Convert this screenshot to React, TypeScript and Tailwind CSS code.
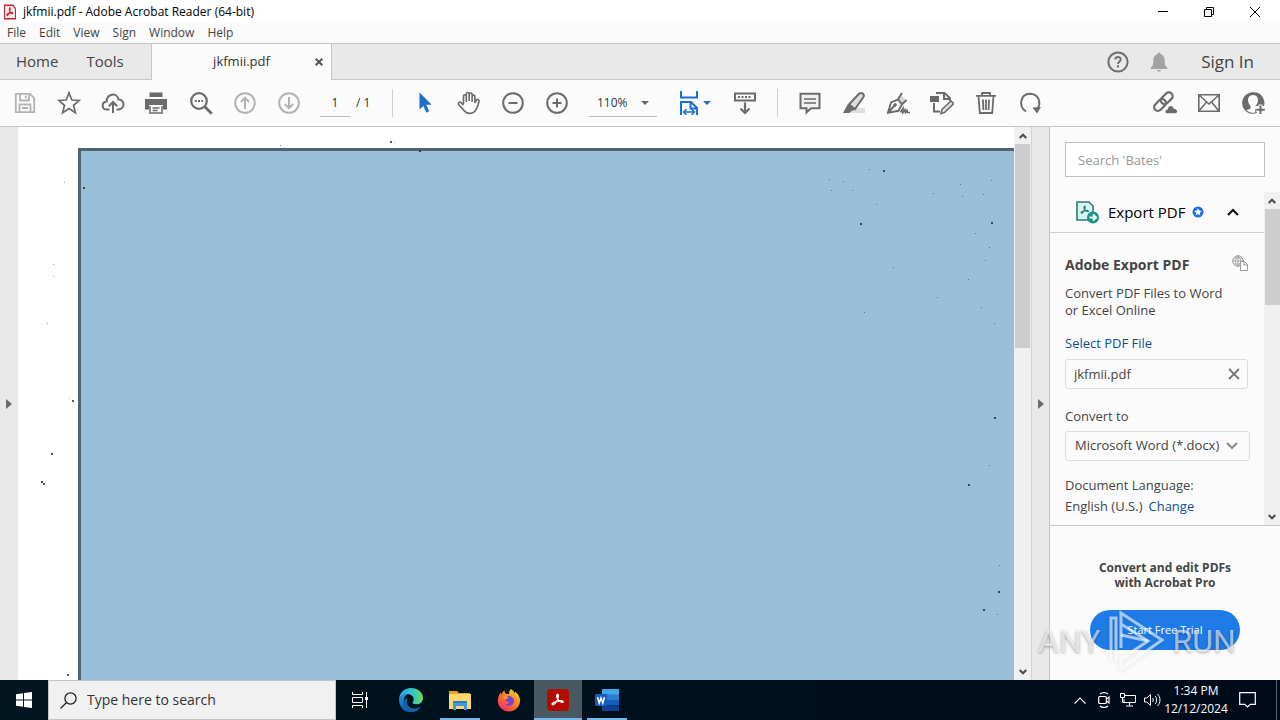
import type { ReactNode } from "react";
import clsx from "clsx";

interface IconProps {
  children: ReactNode;
  className?: string;
}

function Icon({ children, className }: IconProps) {
  return (
    <svg
      viewBox="0 0 24 24"
      aria-hidden="true"
      className={clsx("h-6 w-6 shrink-0", className)}
      fill="none"
      stroke="currentColor"
      strokeWidth="2"
    >
      {children}
    </svg>
  );
}

interface ToolProps {
  label: string;
  children: ReactNode;
  className?: string;
}

function Tool({ label, children, className }: ToolProps) {
  return (
    <button
      type="button"
      aria-label={label}
      className={clsx("flex h-10 w-11 shrink-0 items-center justify-center", className)}
    >
      <Icon>{children}</Icon>
    </button>
  );
}

function AcrobatMark() {
  return (
    <path
      d="M6 17c-1.200-.8.5-2.300 4-3.300 3-.9 7-1.200 7.600-.1.500 1.200-2.200 1.200-4.400-.6-2.200-1.800-3-5.200-2.300-6.600.6-1 1.700-.4 1.500 1.400C12.100 10.700 8.800 18.200 6 17z"
      fill="none"
    />
  );
}

const menus = ["File", "Edit", "View", "Sign", "Window", "Help"];

function TitleBar() {
  return (
    <header className="shrink-0">
      <div className="flex h-[23px] items-center bg-white text-black">
        <svg viewBox="0 0 24 24" className="ml-1 h-4 w-3 shrink-0" preserveAspectRatio="none" aria-hidden="true">
          <path d="M1 2h17l5 5v15H1z" fill="#fbe9e9" stroke="#c8202f" strokeWidth="2.200" />
          <g stroke="#c8202f" strokeWidth="2">
            <AcrobatMark />
          </g>
        </svg>
        <h1 className="ml-[7px] text-xs">jkfmii.pdf - Adobe Acrobat Reader (64-bit)</h1>
        <div className="ml-auto flex h-full pr-0.5">
          <button type="button" aria-label="Minimize" className="flex w-[46px] items-center justify-center">
            <svg viewBox="0 0 10 10" className="h-2.5 w-2.5" stroke="#000">
              <path d="M0 4.500h10" />
            </svg>
          </button>
          <button type="button" aria-label="Restore" className="flex w-[46px] items-center justify-center">
            <svg viewBox="0 0 10 10" className="h-2.5 w-2.5" stroke="#000" fill="none">
              <path d="M.5 2.500h7v7h-7zM2.500 2.500v-2h7v7h-2" />
            </svg>
          </button>
          <button type="button" aria-label="Close" className="flex w-[46px] items-center justify-center">
            <svg viewBox="0 0 10 10" className="h-2.5 w-2.5" stroke="#000">
              <path d="M0 0l10 10M10 0L0 10" />
            </svg>
          </button>
        </div>
      </div>
      <nav className="flex h-5 items-center gap-[13px] bg-[#fafafa] px-[7px] text-xs text-[#444]">
        {menus.map((menu) => (
          <button key={menu} type="button">
            {menu}
          </button>
        ))}
      </nav>
    </header>
  );
}

function TabBar() {
  return (
    <div className="flex h-[37px] shrink-0 items-stretch border-y border-[#c6c6c6] bg-[#e9e9e9] text-[#444]">
      <div className="flex w-[151px] gap-7 pl-4 text-[15px]">
        <button type="button">Home</button>
        <button type="button">Tools</button>
      </div>
      <div className="-mb-px flex w-[181px] items-center border-x border-[#c6c6c6] bg-[#fbfbfb]">
        <button type="button" className="flex-1 pl-5 text-center text-[13px] text-[#333]">
          jkfmii.pdf
        </button>
        <button type="button" aria-label="Close tab" className="mr-1 flex h-4 w-4 shrink-0 items-center justify-center">
          <svg viewBox="0 0 8 8" className="h-2 w-2" stroke="#555" strokeWidth="2">
            <path d="M.7.7l6.600 6.600M7.300.7L.7 7.300" />
          </svg>
        </button>
      </div>
      <div className="ml-auto flex items-center pr-[26px]">
        <button type="button" aria-label="Help" className="mr-[17px] text-[#707070]">
          <Icon>
            <circle cx="12" cy="12" r="9.600" />
            <path d="M9.300 9.600c0-3.600 5.400-3.500 5.400-.2 0 2.100-2.700 2.100-2.700 4.600" />
            <path d="M12 15.300v2.200" strokeWidth="2.200" />
          </Icon>
        </button>
        <button type="button" aria-label="Notifications" className="mr-[30px] text-[#a3a3a3]">
          <Icon>
            <path
              d="M12 2.500c.9 0 1.500.6 1.500 1.500 3 .9 4.200 3.300 4.200 6.500 0 4 .5 5.500 2.600 7V19H3.700v-1.500c2.100-1.500 2.600-3 2.600-7 0-3.200 1.200-5.600 4.200-6.500 0-.9.600-1.500 1.500-1.500zM10 20h4c-.3 2-3.700 2-4 0z"
              fill="currentColor"
              stroke="none"
            />
          </Icon>
        </button>
        <button type="button" className="text-[17px]">
          Sign In
        </button>
      </div>
    </div>
  );
}

function Divider({ className }: { className?: string }) {
  return <div className={clsx("h-7 w-px shrink-0 bg-[#cfcfcf]", className)} />;
}

function Toolbar() {
  return (
    <div className="flex h-[47px] shrink-0 items-center border-b border-[#c6c6c6] bg-[#fbfbfb] pr-[5px] pl-[3px] text-[#6b6b6b]">
      <Tool label="Save" className="text-[#b3b3b3]">
        <path d="M2.800 2.800H17l4.200 4.200v14.200H2.800zM7 3v6.500h9V3M12.800 4.500v3M6.500 21v-7.500h11V21M9 17h6" strokeWidth="1.800" />
      </Tool>
      <Tool label="Star">
        <path d="M12 1.800l2.800 7.200 7.500.4-5.800 4.900 1.900 7.500-6.400-4.200-6.400 4.200 1.900-7.500L1.700 9.400l7.500-.4z" strokeWidth="1.700" />
      </Tool>
      <Tool label="Upload">
        <path d="M8.500 18.500H6C.4 18.500.2 11 5.700 10.600 5.600 2.500 16 1 17.500 8.500c6.500-.2 6.500 9.600.3 10H15.500" />
        <path d="M12 22V11.500M7.800 15.200L12 11l4.200 4.200" />
      </Tool>
      <Tool label="Print" className="-ml-px">
        <path d="M5.500 1.500h13V6h-13zM1 8h22v10.500h-4V14H5v4.500H1z" fill="currentColor" stroke="none" />
        <path d="M6 15v7h12v-7M8.500 17h7M8.500 19.500h5" strokeWidth="1.500" />
      </Tool>
      <Tool label="Find" className="ml-px">
        <circle cx="10" cy="10" r="7.800" strokeWidth="2.200" />
        <path d="M15.800 15.800l7 7" strokeWidth="2.800" />
        <path d="M5.800 10h2M9 10h2M12.200 10h2" />
      </Tool>
      <Tool label="Previous page" className="text-[#b3b3b3]">
        <circle cx="12" cy="12" r="9.800" />
        <path d="M12 18V7M7.800 11L12 6.800l4.200 4.200" />
      </Tool>
      <Tool label="Next page" className="text-[#b3b3b3]">
        <circle cx="12" cy="12" r="9.800" />
        <path d="M12 6v11M7.800 13l4.200 4.200 4.200-4.200" />
      </Tool>
      <label className="ml-[9px] flex items-center gap-1.5 text-xs text-[#333]">
        <input
          aria-label="Page number"
          defaultValue="1"
          className="h-7 w-[30px] border-b border-[#b8b8b8] bg-transparent text-center outline-none"
        />
        <span className="w-4">/&nbsp;1</span>
      </label>
      <Divider className="ml-5" />
      <Tool label="Select" className="ml-2.5">
        <path d="M6.500 1.500l12.200 12.300h-5.500l3 6.500-2.800 1.400-3-6.700-3.900 3.500z" fill="#1f6fc9" stroke="none" />
      </Tool>
      <Tool label="Hand">
        <path
          d="M6.500 13V5.200c0-2 2.800-2 2.800 0V11M9.300 10V3c0-2 2.900-2 2.900 0v7M12.200 10V3.600c0-2 2.900-2 2.900 0V11M15.100 10V5.600c0-2 2.800-2 2.800 0V12l1.200-2.500c1-2 3.400-.9 2.900 1.200-.8 3.500-1.700 5.800-3.200 8.400-2.400 4-8.300 4.300-11.200 1L1.800 13.700c-1.400-1.700.8-3.300 2.300-2l2.400 2.400"
          strokeWidth="1.600"
        />
      </Tool>
      <Tool label="Zoom out">
        <circle cx="12" cy="12" r="9.800" />
        <path d="M7.500 12h9" />
      </Tool>
      <Tool label="Zoom in">
        <circle cx="12" cy="12" r="9.800" />
        <path d="M7.500 12h9M12 7.500v9" />
      </Tool>
      <div className="relative ml-2.5 shrink-0">
        <select
          aria-label="Zoom level"
          className="h-7 w-[68px] appearance-none border-b border-[#b8b8b8] bg-transparent pl-2 text-xs text-[#333] outline-none"
        >
          <option>110%</option>
        </select>
        <svg viewBox="0 0 8 4" className="pointer-events-none absolute top-3 right-2 h-1 w-2" fill="#666">
          <path d="M0 0h8L4 4z" />
        </svg>
      </div>
      <button type="button" aria-label="Fit width" className="ml-5 flex h-10 w-9 shrink-0 items-center gap-0.5 text-[#1f6fc9]">
        <Icon>
          <path d="M4 0v6.500h16V0M4 24V11h10l6 6v7M13.500 11v6.500H20" />
          <path d="M6.500 21h11M9.500 18l-3 3 3 3M14.500 18l3 3-3 3" strokeWidth="1.500" />
        </Icon>
        <svg viewBox="0 0 8 4" className="h-1 w-2 shrink-0" fill="currentColor">
          <path d="M0 0h8L4 4z" />
        </svg>
      </button>
      <Tool label="Scrolling" className="ml-2.5">
        <path d="M2 2.500h20v7H2z" />
        <path d="M5 6h14" strokeDasharray="2 1.500" />
        <path d="M12 11.500V21M7.500 17.500L12 22l4.500-4.500" strokeWidth="2.200" />
      </Tool>
      <Divider className="ml-2.5" />
      <Tool label="Comment" className="ml-2.5">
        <path d="M2.500 2.800h19v14.400H13L8.500 21.500v-4.300h-6z" fill="#f0f0f0" />
        <path d="M6 8h12M6 12h12" strokeWidth="1.500" />
      </Tool>
      <Tool label="Highlight">
        <path d="M8 17h15v5H4z" fill="#dedede" stroke="none" />
        <path d="M7 13.500L17 2.800c2.200-2.200 6.200.6 4.300 3.400L13 18z" fill="#dedede" strokeWidth="2" />
        <path d="M6 13l7.500 5.500-4 1.500-2.500 2H1z" fill="currentColor" stroke="none" />
      </Tool>
      <Tool label="Fill and sign">
        <path d="M12 7.500l3-3.500 5 5.500-4 3.200z" fill="#d8d8d8" stroke="none" />
        <path d="M2 21.800l3-10.300 7-3.200 4 5-3.500 6.500zM2.500 21.300l6-6.800M12 8.300l4-6.300M16 13.300l4.500-4.300" strokeWidth="1.900" />
        <circle cx="9" cy="14" r="1.300" fill="currentColor" strokeWidth="1" />
        <path d="M14.500 21.500l2.500-4v4l2-2.700.5 2.700 1.500-2 .5 2H24" strokeWidth="1.700" />
      </Tool>
      <Tool label="Edit PDF">
        <path d="M6 2h8.500l5.500 5.200V10M14 2v6h6M4 12v8.500h6" />
        <path d="M0 5h9v6H0z" fill="currentColor" stroke="none" />
        <path d="M11 22.500l1-4 9-8.500 2.700 2.700-9 8.700z" strokeWidth="1.600" fill="#e4e4e4" />
      </Tool>
      <Tool label="Delete">
        <path d="M2 4.800h20M8 4.500V2h8v2.500M4.500 5l1.300 17h12.400l1.300-17M9 8.500l.4 10.500M12 8.500V19M15 8.500L14.600 19" strokeWidth="1.800" />
      </Tool>
      <Tool label="Rotate">
        <path d="M8 20.300C.5 16.500 1.500 3 12 2.800c8.500.2 11.500 8.500 7.500 15" />
        <path d="M14.500 16.500l8.500-.5-4 6.500z" fill="currentColor" stroke="none" />
      </Tool>
      <div className="ml-auto flex">
        <Tool label="Share link">
          <g transform="rotate(45 10 11)">
            <rect x="6.200" y="-1" width="7.600" height="13.500" rx="3.800" strokeWidth="2.200" />
            <rect x="6.200" y="8.500" width="7.600" height="13.500" rx="3.800" strokeWidth="2.200" />
          </g>
          <path
            d="M14.500 22.800c-3.500 0-3-4.300-.2-4.500.5-4.700 6.200-4.700 6.700-.8 4.500 0 4.300 5.300 1 5.300z"
            fill="currentColor"
            stroke="#fbfbfb"
            strokeWidth="1"
          />
        </Tool>
        <Tool label="Email">
          <path d="M1.800 3.800h20.400v16.400H1.800zM2 4l10 9L22 4M2 20l7.500-9M22 20l-7.500-9" strokeWidth="1.600" />
        </Tool>
        <Tool label="Add account">
          <path
            d="M12 1.200a10.800 10.800 0 1 0 3.800 20.900v-3.400c-1.800-.6-2.300-1.900-1.300-3.700 2-2 2.700-4.500 2.400-7-.6-5.200-9.200-5.200-9.800 0-.3 2.500.4 5 2.400 7 1 2.500-.8 3-4 4.300C8.500 22 12 21.800 13 21.800h1V15h9A10.800 10.800 0 0 0 12 1.200z"
            fill="currentColor"
            stroke="none"
            fillRule="evenodd"
          />
          <path d="M19.500 13.500v10M14.700 18.800h9.300" stroke="#fbfbfb" strokeWidth="4" />
          <path d="M19.500 14.500v8.500M15.200 18.800h8.600" />
        </Tool>
      </div>
    </div>
  );
}

// dust on the scanned page: x, y, size in document pane pixels
const specks: [number, number, number][] = [
  [372, 14, 2], [376, 15, 1], [262, 18, 1], [401, 23, 2], [46, 55, 1], [65, 60, 2], [35, 137, 1],
  [35, 149, 1], [29, 196, 1], [60, 214, 1], [51, 271, 1], [54, 273, 2], [33, 326, 2], [23, 354, 2],
  [25, 356, 2], [49, 547, 2], [851, 42, 1], [865, 43, 2], [813, 63, 1], [825, 54, 1], [811, 52, 1],
  [834, 63, 1], [858, 77, 1], [842, 96, 2], [915, 66, 1], [942, 57, 1], [944, 69, 1], [973, 53, 1],
  [965, 67, 1], [973, 95, 2], [957, 106, 1], [971, 120, 1], [967, 133, 1], [875, 140, 1],
  [950, 152, 1], [919, 170, 1], [963, 180, 1], [846, 185, 1], [976, 196, 1], [976, 290, 2],
  [971, 338, 1], [950, 357, 2], [981, 438, 1], [980, 464, 2], [965, 482, 2], [979, 487, 1],
];

function ArrowTip({ up }: { up?: boolean }) {
  return (
    <svg viewBox="0 0 8 6" className="h-1.5 w-2" fill="none" stroke="#4a4a4a" strokeWidth="2">
      <path d={up ? "M.7 5L4 1.700 7.300 5" : "M.7 1L4 4.300 7.300 1"} />
    </svg>
  );
}

interface ScrollbarProps {
  className: string;
  thumb: string;
}

function Scrollbar({ className, thumb }: ScrollbarProps) {
  return (
    <div className={clsx("flex shrink-0 flex-col items-center bg-[#f0f0f0]", className)}>
      <button type="button" aria-label="Scroll up" className="flex h-[17px] w-full shrink-0 items-center justify-center">
        <ArrowTip up />
      </button>
      <div className="w-full flex-1">
        <div className={clsx("mx-auto w-[15px] bg-[#cdcdcd]", thumb)} />
      </div>
      <button type="button" aria-label="Scroll down" className="flex h-[17px] w-full shrink-0 items-center justify-center">
        <ArrowTip />
      </button>
    </div>
  );
}

function Splitter({ label, className }: { label: string; className?: string }) {
  return (
    <button
      type="button"
      aria-label={label}
      className={clsx("flex w-[18px] shrink-0 items-center justify-center bg-[#e9e9e9]", className)}
    >
      <svg viewBox="0 0 6 10" className="h-2.5 w-1.5" fill="#6b6b6b">
        <path d="M0 0l6 5-6 5z" />
      </svg>
    </button>
  );
}

function DocumentView() {
  return (
    <section className="relative flex min-w-0 flex-1 overflow-hidden bg-white pt-[21px] pl-[60px]">
      <div className="flex-1 border-t-3 border-l-3 border-[#4f6373] bg-[#9abfd9]" />
      <svg className="pointer-events-none absolute inset-0 h-full w-full" aria-hidden="true">
        {specks.map(([x, y, size]) => (
          <rect key={`${x}-${y}`} x={x} y={y} width={size} height={size} fill="#1d2b36" fillOpacity={size === 1 ? 0.5 : 0.8} />
        ))}
      </svg>
    </section>
  );
}

function ToolsPane() {
  return (
    <aside className="flex w-[231px] shrink-0 flex-col border-l border-[#c6c6c6] bg-[#fbfbfb] text-[13px] text-[#444]">
      <div className="p-[15px]">
        <input
          type="search"
          aria-label="Search tools"
          placeholder="Search 'Bates'"
          className="h-[35px] w-full border border-[#c0c0c0] bg-white px-3 text-[13px] outline-none placeholder:text-[#969696]"
        />
      </div>
      <div className="flex min-h-0 flex-1 border-b border-[#c6c6c6]">
        <div className="min-w-0 flex-1 overflow-hidden">
          <button
            type="button"
            aria-expanded="true"
            className="flex h-[41px] w-full items-center border-b border-[#d0d0d0] pl-[25px] text-left text-black"
          >
            <Icon className="text-[#2b7c78]">
              <path d="M2 2h12l4 4v14H2z" fill="#d5f3f0" strokeWidth="1.600" />
              <g transform="translate(2.500 2.500) scale(.62)" strokeWidth="1.800">
                <AcrobatMark />
              </g>
              <circle cx="18" cy="17.500" r="6" fill="#159587" stroke="none" />
              <path d="M14.500 17.500h6M18 14.500l3 3-3 3" stroke="#fff" />
            </Icon>
            <span className="ml-[9px] text-[15px]">Export PDF</span>
            <svg viewBox="0 0 12 12" className="ml-[7px] h-3 w-3 shrink-0" aria-hidden="true">
              <circle cx="6" cy="6" r="5.500" fill="#1f6fea" />
              <path d="M6 2.200l1.100 2.400 2.600.3-1.900 1.800.5 2.600L6 8l-2.300 1.300.5-2.600-1.900-1.800 2.600-.3z" fill="#fff" />
            </svg>
            <svg viewBox="0 0 12 8" className="mr-[25px] ml-auto h-2 w-3 shrink-0" fill="none" stroke="#111" strokeWidth="2.200">
              <path d="M1 7l5-5 5 5" />
            </svg>
          </button>
          <div className="pr-3.5 pl-[15px]">
            <div className="flex items-center justify-between pt-[22px]">
              <h2 className="text-sm leading-5 font-bold">Adobe Export PDF</h2>
              <svg viewBox="0 0 16 16" className="mr-0.5 mb-1 h-4 w-4 shrink-0" fill="none" stroke="#999" aria-hidden="true">
                <circle cx="6" cy="6" r="5.300" />
                <path d="M.8 6h10M6 .8v10M2 3h8M2 9h8M6 1C2.500 4 2.500 8 6 11M6 1c3.500 3 3.500 7 0 10" strokeWidth=".8" />
                <path d="M8.500 6.500h4l3 3v6h-7z" fill="#fbfbfb" />
                <path d="M12 6.500v3.500h3.500" />
              </svg>
            </div>
            <p className="mt-2.5 leading-[17px]">
              Convert PDF Files to Word
              <br />
              or Excel Online
            </p>
            <label htmlFor="source-file" className="mt-4 block leading-[17px] text-[#0d4f93]">
              Select PDF File
            </label>
            <div className="relative mt-[7px]">
              <input
                id="source-file"
                readOnly
                value="jkfmii.pdf"
                className="h-[30px] w-[183px] rounded-[3px] border border-[#dcdcdc] bg-[#fbfbfb] px-2 outline-none"
              />
              <button type="button" aria-label="Remove file" className="absolute top-[7px] right-2 flex h-4 w-3.5 items-center">
                <svg viewBox="0 0 12 12" className="h-3 w-3" stroke="#777" strokeWidth="1.800">
                  <path d="M1 1l10 10M11 1L1 11" />
                </svg>
              </button>
            </div>
            <label htmlFor="target-format" className="mt-[19px] block leading-[17px]">
              Convert to
            </label>
            <div className="relative mt-1.5">
              <select
                id="target-format"
                className="h-[30px] w-full appearance-none rounded-[3px] border border-[#dcdcdc] bg-[#fbfbfb] pl-[9px] outline-none"
              >
                <option>Microsoft Word (*.docx)</option>
              </select>
              <svg
                viewBox="0 0 12 8"
                className="pointer-events-none absolute top-[11px] right-3 h-2 w-3"
                fill="none"
                stroke="#8a8a8a"
                strokeWidth="2"
              >
                <path d="M1 1l5 5 5-5" />
              </svg>
            </div>
            <p className="mt-4 leading-[17px]">Document Language:</p>
            <p className="mt-1 leading-[17px]">
              English (U.S.)
              <a href="#language" className="ml-1.5 text-[#0d4f93]">
                Change
              </a>
            </p>
          </div>
        </div>
        <Scrollbar className="w-4" thumb="h-24" />
      </div>
      <div className="relative h-[154px] shrink-0 pt-[34px] text-center">
        <p className="text-xs leading-[15px] font-bold">
          Convert and edit PDFs
          <br />
          with Acrobat Pro
        </p>
        <button type="button" className="mt-5 h-10 w-[150px] rounded-full bg-[#1f7be8] text-[11px] text-white">
          Start Free Trial
        </button>
        <Watermark />
      </div>
    </aside>
  );
}

function Watermark() {
  return (
    <div className="pointer-events-none absolute top-[84px] -left-3 flex items-center gap-2 font-[Roboto,'Liberation_Sans',sans-serif] text-[32px] leading-none text-white/60 [text-shadow:0_1px_3px_rgb(0_0_0/0.35)]">
      <span>ANY</span>
      <svg
        viewBox="0 0 56 62"
        className="h-[62px] w-14 drop-shadow-sm"
        fill="none"
        stroke="#fff"
        strokeOpacity=".6"
        strokeWidth="3"
        aria-hidden="true"
      >
        <path d="M13 38V3l41 27-41 29V49l27-18-27-17M3 50V8h5v43" />
        <path d="M13 25l27 6" />
      </svg>
      <span>RUN</span>
    </div>
  );
}

interface TaskButtonProps {
  label: string;
  children: ReactNode;
  running?: boolean;
  active?: boolean;
}

function TaskButton({ label, children, running, active }: TaskButtonProps) {
  return (
    <button
      type="button"
      aria-label={label}
      className={clsx("flex w-12 shrink-0 flex-col items-center", active && "bg-[#485962]")}
    >
      <span className="flex flex-1 items-center">{children}</span>
      <span className={clsx("-mt-0.5 h-0.5", active ? "w-12" : "w-10", (running || active) && "bg-[#76b9ed]")} />
    </button>
  );
}

function Taskbar() {
  return (
    <footer className="flex h-10 shrink-0 bg-linear-to-r from-[#00171f] to-[#000a1a] text-white">
      <button type="button" aria-label="Start" className="flex w-12 shrink-0 items-center justify-center">
        <svg viewBox="0 0 16 16" className="h-4 w-4" fill="#fff">
          <path d="M0 2.200l7-1v6.300H0zM8 1.100L16 0v7.500H8zM0 8.500h7v6.300l-7-1zM8 8.500h8V16l-8-1.100z" />
        </svg>
      </button>
      <label className="flex w-72 shrink-0 items-center border border-[#c4c4c4] bg-[#f1f1f1] pl-[11px]">
        <svg viewBox="0 0 17 17" className="h-[17px] w-[17px] shrink-0" fill="none" stroke="#222" strokeWidth="1.300">
          <circle cx="10.500" cy="6.500" r="5.600" />
          <path d="M6.500 10.500L.5 16.500" />
        </svg>
        <input
          aria-label="Search Windows"
          placeholder="Type here to search"
          className="ml-2.5 min-w-0 flex-1 bg-transparent text-sm outline-none placeholder:text-[#333]"
        />
      </label>
      <div className="flex gap-px pl-0.5">
        <TaskButton label="Task View">
          <svg viewBox="0 0 18 16" className="mr-1 h-4 w-[18px]" fill="none" stroke="#fff">
            <path d="M1.500 0v2.500h10V0M1.500 16v-2.500h10V16M1.500 5.500h10v5h-10zM15.500 0v16" />
            <path d="M14 5h3v3h-3z" fill="#fff" stroke="none" />
          </svg>
        </TaskButton>
        <TaskButton label="Edge">
          <svg viewBox="0 0 24 24" className="h-6 w-6">
            <defs>
              <linearGradient id="edge-top" x1="0" x2="1">
                <stop offset="0" stopColor="#2aa7e8" />
                <stop offset=".55" stopColor="#2fc5c8" />
                <stop offset="1" stopColor="#6cdc5a" />
              </linearGradient>
              <linearGradient id="edge-body" x2="0" y2="1">
                <stop offset="0" stopColor="#1b9be2" />
                <stop offset="1" stopColor="#0f58a8" />
              </linearGradient>
            </defs>
            <path
              d="M0 12C0 5 5 0 12 0s12 4.500 12 10c0 4-3 6.300-6.500 6.300-3 0-4.500-1-4-2 .8-1 1.300-1.800 1.300-3 0-3-3-5-6.500-5C4 6.300 0 9 0 12z"
              fill="url(#edge-top)"
            />
            <path d="M0 12c0-4 4-6 8.300-5.700-2.800 1.700-3.800 4.500-3.500 7.500C5.300 18.500 9 23 14 23.800 6 25.500 0 19.500 0 12z" fill="url(#edge-body)" />
            <path
              d="M8.500 10.500c-2 4 .5 10 7 10 2.500 0 4.500-.8 6.300-2C19.500 22.300 16.500 24 12.500 24 7.500 22.500 4.500 18.500 4.800 14c.2-2 1.500-3.300 3.700-3.500z"
              fill="#1560ad"
            />
          </svg>
        </TaskButton>
        <TaskButton label="File Explorer" running>
          <svg viewBox="0 0 22 20" className="h-5 w-[22px]">
            <path d="M0 1h8l2 2h11v4H0z" fill="#e8a324" />
            <path d="M0 4h22v15H0z" fill="#fcd872" />
            <path d="M4 11h14v9h-3v-4H7v4H4z" fill="#3f9bdc" />
            <path d="M4 11h14v2H4z" fill="#2f7fc2" />
          </svg>
        </TaskButton>
        <TaskButton label="Firefox">
          <svg viewBox="0 0 24 24" className="h-6 w-6">
            <defs>
              <linearGradient id="fox" x1="1" x2=".2" y2="1">
                <stop offset="0" stopColor="#ffe83b" />
                <stop offset=".45" stopColor="#ff8a1e" />
                <stop offset="1" stopColor="#f0285c" />
              </linearGradient>
            </defs>
            <path
              d="M14 1c2 1 3 3 3.500 4.200C18 4.500 18 4 18 3.500c3.500 2.500 5.200 6 5 9.500-.3 6-5 10.500-11 10.500S1 19 .8 13C.8 9.500 2 6.500 3.800 4.500l.7 2C5 5 6 3.500 7.500 2.500c0 1.500.5 2.700 1.500 3.300l3 .2c-.2-2 .7-4 2-5z"
              fill="url(#fox)"
            />
            <path d="M7 10c1.500-2 4.500-2.500 7-1.500 3 1.300 4 5 2 7.500-2 2.500-6.500 2.500-8.500 0 2 .5 4-.3 5-2-2 0-3.500-.5-4-2-.3-1-.7-1.500-1.500-2z" fill="#7443d6" />
            <path d="M6 9c2.500-1.500 4-1 5.500.5-1 1-2.500 1.500-3.500 2.500z" fill="#ff9a1f" />
          </svg>
        </TaskButton>
        <TaskButton label="Adobe Acrobat" active>
          <svg viewBox="0 0 24 24" className="h-[22px] w-[22px]">
            <rect width="24" height="24" rx="4" fill="#b30b00" />
            <g stroke="#fff" strokeWidth="1.500">
              <AcrobatMark />
            </g>
          </svg>
        </TaskButton>
        <TaskButton label="Word" running>
          <svg viewBox="0 0 24 22" className="h-[22px] w-6">
            <path d="M7 0h17v6H7z" fill="#41a5ee" />
            <path d="M7 5.500h17V11H7z" fill="#2b7cd3" />
            <path d="M7 11h17v5.500H7z" fill="#185abd" />
            <path d="M7 16.500h17V22H7z" fill="#103f91" />
            <rect y="5" width="12" height="12" rx="1" fill="#185abd" />
            <path d="M2.500 8l1.700 6L6 9l1.800 5 1.700-6" fill="none" stroke="#fff" strokeWidth="1.500" />
          </svg>
        </TaskButton>
      </div>
      <div className="ml-auto flex items-center pr-[3px]">
        <button type="button" aria-label="Show hidden icons" className="flex h-full w-6 items-center justify-center">
          <svg viewBox="0 0 12 7" className="h-[7px] w-3" fill="none" stroke="#fff" strokeWidth="1.200">
            <path d="M.5 6.500L6 1l5.500 5.500" />
          </svg>
        </button>
        <button type="button" aria-label="Meet Now" className="flex h-full w-6 items-center justify-center">
          <svg viewBox="0 0 12 16" className="h-4 w-3" fill="none" stroke="#fff" strokeWidth="1.200">
            <rect x=".7" y="4.500" width="7.600" height="7" rx="1" />
            <path d="M8.500 7l2.500-2v6L8.500 9M2 2c2-1.800 6-1.800 8 0M2 14c2 1.800 6 1.800 8 0" />
          </svg>
        </button>
        <button type="button" aria-label="Network" className="flex h-full w-6 items-center justify-center">
          <svg viewBox="0 0 16 14" className="h-3.5 w-4" fill="none" stroke="#fff">
            <path d="M5 2.500h10.500v7H4V6M9.500 9.500v3M6 13h7M.5.5h4v4h-4zM2.500 4.500v5h2" />
          </svg>
        </button>
        <button type="button" aria-label="Volume" className="flex h-full w-6 items-center justify-center">
          <svg viewBox="0 0 17 14" className="h-3.5 w-[17px]" fill="none" stroke="#fff">
            <path d="M.5 5h2.300l3.700-3.500v11L2.800 9H.5zM8.500 5c1 1 1 3 0 4M11 3c2.200 2 2.200 6 0 8M13.500 1c3.300 3 3.300 9 0 12" />
          </svg>
        </button>
        <button type="button" className="w-16 shrink-0 text-center text-xs leading-[18px] whitespace-nowrap">
          1:34 PM
          <br />
          12/12/2024
        </button>
        <button type="button" aria-label="Notifications" className="flex h-full w-[38px] items-center justify-center">
          <svg viewBox="0 0 17 16" className="h-4 w-[17px]" fill="none" stroke="#fff" strokeWidth="1.200">
            <path d="M.7.7h15.600v11.600h-5L8.500 15l-2.800-2.700h-5z" />
          </svg>
        </button>
        <div className="ml-2.5 h-full w-px bg-[#5b6670]" />
      </div>
    </footer>
  );
}

export default function App() {
  return (
    <div className="flex h-screen flex-col overflow-hidden bg-white font-['Open_Sans','Noto_Sans',sans-serif]">
      <TitleBar />
      <TabBar />
      <Toolbar />
      <main className="flex min-h-0 flex-1">
        <Splitter label="Show navigation pane" />
        <DocumentView />
        <Scrollbar className="w-[17px]" thumb="h-51" />
        <Splitter label="Hide tools pane" className="border-l border-[#d2d2d2]" />
        <ToolsPane />
      </main>
      <Taskbar />
    </div>
  );
}
